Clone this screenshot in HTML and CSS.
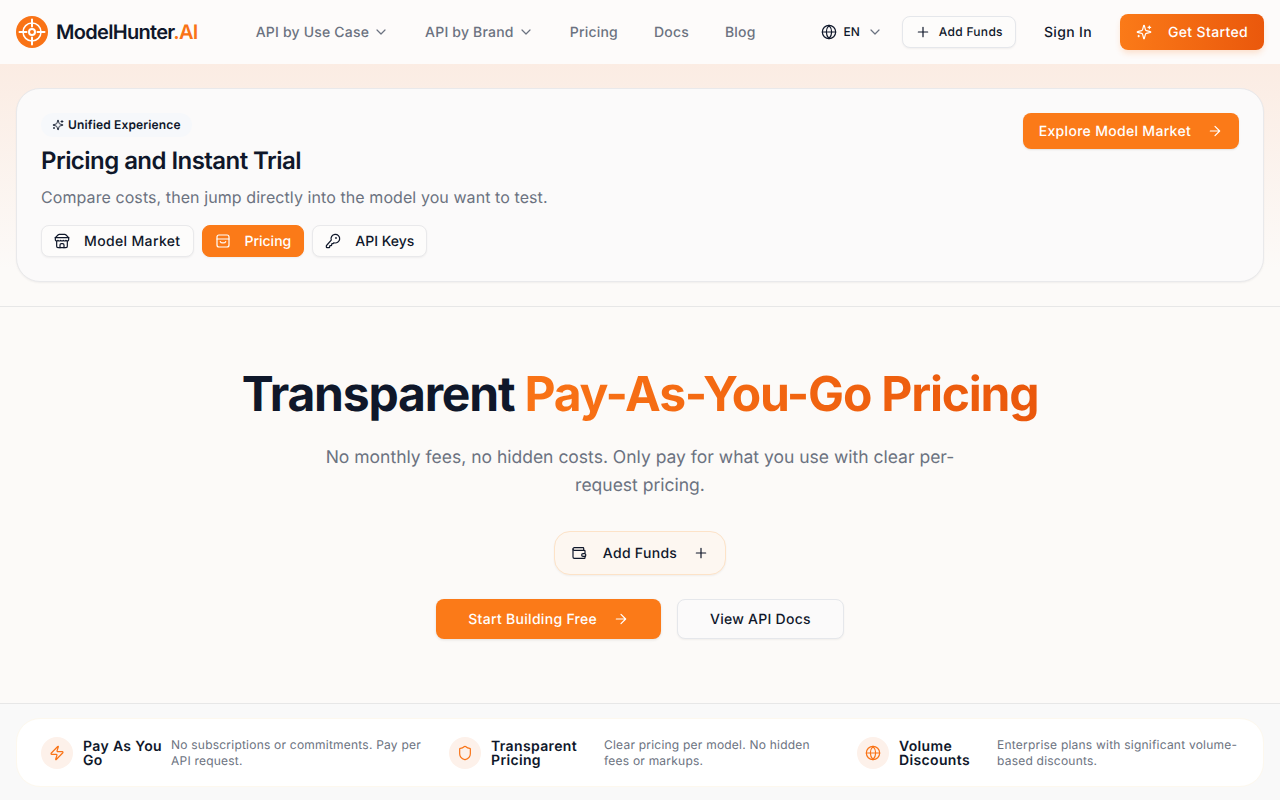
FILE: index.html
```html
<!DOCTYPE html>
<html lang="en">
<head>
  <meta charset="UTF-8">
  <meta name="viewport" content="width=device-width, initial-scale=1.0">
  <title>ModelHunter.AI Pricing</title>
  <link rel="stylesheet" href="styles.css">
</head>
<body>

<!-- Header -->
<header class="site-header">
  <a class="logo">
    <svg class="logo-mark" viewBox="0 0 32 32" fill="none">
      <circle cx="16" cy="16" r="16" fill="#f97316"/>
      <circle cx="16" cy="16" r="9" stroke="#fff" stroke-width="1.500"/>
      <circle cx="16" cy="16" r="3" stroke="#fff" stroke-width="2"/>
      <path d="M16 3.500v7M16 21.500v7M3.500 16h7M21.500 16h7" stroke="#fff" stroke-width="2" stroke-linecap="round"/>
    </svg>
    <span class="logo-text">ModelHunter<span class="logo-accent">.AI</span></span>
  </a>

  <nav class="main-nav">
    <a class="nav-link">API by Use Case
      <svg class="icon-16" viewBox="0 0 24 24"><path d="m6 9 6 6 6-6"/></svg>
    </a>
    <a class="nav-link">API by Brand
      <svg class="icon-16" viewBox="0 0 24 24"><path d="m6 9 6 6 6-6"/></svg>
    </a>
    <a class="nav-link">Pricing</a>
    <a class="nav-link">Docs</a>
    <a class="nav-link">Blog</a>
  </nav>

  <div class="header-actions">
    <div class="lang">
      <svg class="icon-16" viewBox="0 0 24 24"><circle cx="12" cy="12" r="10"/><path d="M2 12h20M12 2a14.500 14.500 0 0 0 0 20 14.500 14.500 0 0 0 0-20"/></svg>
      <span>EN</span>
      <svg class="icon-16 lang-caret" viewBox="0 0 24 24"><path d="m6 9 6 6 6-6"/></svg>
    </div>
    <a class="add-funds-small">
      <svg class="icon-16" viewBox="0 0 24 24"><path d="M5 12h14M12 5v14"/></svg>
      Add Funds
    </a>
    <a class="sign-in">Sign In</a>
    <a class="get-started">
      <svg class="icon-16" viewBox="0 0 24 24"><path d="M9.900 15.500a2 2 0 0 0-1.400-1.400l-6.100-1.600a.5.5 0 0 1 0-1l6.100-1.600a2 2 0 0 0 1.400-1.400l1.600-6.100a.5.5 0 0 1 1 0l1.600 6.100a2 2 0 0 0 1.400 1.400l6.100 1.600a.5.5 0 0 1 0 1l-6.100 1.600a2 2 0 0 0-1.400 1.400l-1.600 6.100a.5.5 0 0 1-1 0z"/><path d="M20 3v4M22 5h-4M4 17v2M5 18H3"/></svg>
      Get Started
    </a>
  </div>
</header>

<!-- Trial Strip -->
<section class="trial-strip">
  <div class="trial-card">
    <div class="trial-info">
      <div class="pill">
        <svg class="icon-12" viewBox="0 0 24 24"><path d="M9.900 15.500a2 2 0 0 0-1.400-1.400l-6.100-1.600a.5.5 0 0 1 0-1l6.100-1.600a2 2 0 0 0 1.400-1.400l1.600-6.100a.5.5 0 0 1 1 0l1.600 6.100a2 2 0 0 0 1.400 1.400l6.100 1.600a.5.5 0 0 1 0 1l-6.100 1.600a2 2 0 0 0-1.400 1.400l-1.600 6.100a.5.5 0 0 1-1 0z"/><path d="M20 3v4M22 5h-4M4 17v2M5 18H3"/></svg>
        Unified Experience
      </div>
      <h2 class="trial-title">Pricing and Instant Trial</h2>
      <p class="trial-text">Compare costs, then jump directly into the model you want to test.</p>
      <div class="tabs">
        <a class="tab">
          <svg class="icon-16" viewBox="0 0 24 24"><path d="m2 7 4.400-4.400A2 2 0 0 1 7.800 2h8.400a2 2 0 0 1 1.400.6L22 7"/><path d="M4 12v8a2 2 0 0 0 2 2h12a2 2 0 0 0 2-2v-8"/><path d="M15 22v-4a2 2 0 0 0-2-2h-2a2 2 0 0 0-2 2v4"/><path d="M2 7h20"/><path d="M22 7v3a2 2 0 0 1-2 2 2.700 2.700 0 0 1-2-1 2.700 2.700 0 0 1-2 1 2.700 2.700 0 0 1-2-1 2.700 2.700 0 0 1-2 1 2.700 2.700 0 0 1-2-1 2.700 2.700 0 0 1-2 1 2.700 2.700 0 0 1-2-1 2.700 2.700 0 0 1-2 1 2 2 0 0 1-2-2V7"/></svg>
          Model Market
        </a>
        <a class="tab tab-active">
          <svg class="icon-16" viewBox="0 0 24 24"><rect x="3" y="3" width="18" height="18" rx="3"/><path d="M3 9h18M8 13c1 2.500 7 2.500 8 0"/></svg>
          Pricing
        </a>
        <a class="tab tab-short">
          <svg class="icon-16" viewBox="0 0 24 24"><path d="M2.600 18.400A2 2 0 0 0 2 19.800V21a1 1 0 0 0 1 1h3a1 1 0 0 0 1-1v-1a1 1 0 0 1 1-1h1a1 1 0 0 0 1-1v-1a1 1 0 0 1 1-1h.2a2 2 0 0 0 1.400-.6l.8-.8a6.500 6.500 0 1 0-4-4z"/><circle cx="16.500" cy="7.500" r=".5"/></svg>
          API Keys
        </a>
      </div>
    </div>
    <a class="explore-btn">Explore Model Market
      <svg class="icon-16" viewBox="0 0 24 24"><path d="M5 12h14M12 5l7 7-7 7"/></svg>
    </a>
  </div>
</section>

<!-- Hero -->
<section class="hero">
  <h1 class="hero-title">Transparent <span class="hero-accent">Pay-As-You-Go Pricing</span></h1>
  <p class="hero-text">No monthly fees, no hidden costs. Only pay for what you use with clear per-request pricing.</p>
  <a class="add-funds-big">
    <svg class="icon-16" viewBox="0 0 24 24"><path d="M19 7V5a1 1 0 0 0-1-1H5a2 2 0 0 0 0 4h15a1 1 0 0 1 1 1v4h-3a2 2 0 0 0 0 4h3a1 1 0 0 0 1-1v-2"/><path d="M3 6v12a2 2 0 0 0 2 2h15a1 1 0 0 0 1-1v-2"/></svg>
    Add Funds
    <svg class="icon-16" viewBox="0 0 24 24"><path d="M5 12h14M12 5v14"/></svg>
  </a>
  <div class="hero-buttons">
    <a class="btn-primary">Start Building Free
      <svg class="icon-16" viewBox="0 0 24 24"><path d="M5 12h14M12 5l7 7-7 7"/></svg>
    </a>
    <a class="btn-secondary">View API Docs</a>
  </div>
</section>

<!-- Features -->
<section class="features">
  <div class="features-card">
    <div class="feature feature-one">
      <span class="feature-icon">
        <svg class="icon-16" viewBox="0 0 24 24"><path d="M4 14a1 1 0 0 1-.8-1.600l9.900-10.200a.5.5 0 0 1 .9.500l-1.900 6A1 1 0 0 0 13 10h7a1 1 0 0 1 .8 1.600l-9.900 10.200a.5.5 0 0 1-.9-.5l1.900-6A1 1 0 0 0 11 14z"/></svg>
      </span>
      <h3 class="feature-title">Pay As You Go</h3>
      <p class="feature-text">No subscriptions or commitments. Pay per API request.</p>
    </div>
    <div class="feature feature-two">
      <span class="feature-icon">
        <svg class="icon-16" viewBox="0 0 24 24"><path d="M20 13c0 5-3.500 7.500-7.700 8.900a1 1 0 0 1-.6 0C7.500 20.500 4 18 4 13V6a1 1 0 0 1 1-1c2 0 4.500-1.200 6.200-2.700a1.200 1.200 0 0 1 1.600 0C14.500 3.800 17 5 19 5a1 1 0 0 1 1 1z"/></svg>
      </span>
      <h3 class="feature-title">Transparent Pricing</h3>
      <p class="feature-text">Clear pricing per model. No hidden fees or markups.</p>
    </div>
    <div class="feature feature-three">
      <span class="feature-icon">
        <svg class="icon-16" viewBox="0 0 24 24"><circle cx="12" cy="12" r="10"/><path d="M2 12h20M12 2a14.500 14.500 0 0 0 0 20 14.500 14.500 0 0 0 0-20"/></svg>
      </span>
      <h3 class="feature-title">Volume Discounts</h3>
      <p class="feature-text">Enterprise plans with significant volume-based discounts.</p>
    </div>
  </div>
</section>

</body>
</html>
```

FILE: styles.css
```css
* {
  box-sizing: border-box;
}

html,
body {
  height: 800px;
  overflow: hidden;
}

body {
  font-family: Inter, "Liberation Sans", sans-serif;
  text-rendering: geometricPrecision;
  margin: 0;
  padding: 0;
  background-color: #fcfaf8;
  color: #0f172a;
  display: flex;
  flex-direction: column;
}

svg {
  flex-shrink: 0;
}

.icon-16,
.icon-12 {
  fill: none;
  stroke: currentColor;
  stroke-width: 1.8;
  stroke-linecap: round;
  stroke-linejoin: round;
}

.icon-16 {
  width: 16px;
  height: 16px;
}

.icon-12 {
  width: 12px;
  height: 12px;
}

/* Header */
.site-header {
  height: 64px;
  flex-shrink: 0;
  padding: 0 16px;
  display: flex;
  align-items: center;
  background-color: #fdfbfa;
}

.logo {
  display: flex;
  align-items: center;
  gap: 8px;
}

.logo-mark {
  width: 32px;
  height: 32px;
}

.logo-text {
  font-size: 20px;
  line-height: 28px;
  font-weight: 600;
  letter-spacing: -0.7px;
}

.logo-accent {
  color: #f97316;
}

.main-nav {
  display: flex;
  align-items: center;
  gap: 36px;
  margin-left: 58px;
}

.nav-link {
  display: flex;
  align-items: center;
  gap: 4px;
  font-size: 14px;
  line-height: 21px;
  font-weight: 500;
  letter-spacing: 0.2px;
  color: #6b7280;
}

.header-actions {
  display: flex;
  align-items: center;
  margin-left: auto;
}

.lang {
  display: flex;
  align-items: center;
  gap: 6px;
  font-size: 12px;
  line-height: 16px;
  font-weight: 500;
}

.lang-caret {
  color: #6b7280;
  margin-left: 1px;
}

.add-funds-small {
  display: flex;
  align-items: center;
  gap: 8px;
  height: 32px;
  padding: 0 12px;
  margin-left: 19px;
  font-size: 12px;
  line-height: 16px;
  font-weight: 500;
  letter-spacing: 0.3px;
  background-color: #fdfcfb;
  border: 1px solid #e5e7eb;
  border-radius: 8px;
  box-shadow: 0 1px 2px rgba(0, 0, 0, 0.05);
}

.sign-in {
  margin-left: 28px;
  font-size: 14px;
  line-height: 21px;
  font-weight: 500;
  letter-spacing: 0.35px;
}

.get-started {
  display: flex;
  align-items: center;
  gap: 16px;
  height: 36px;
  padding: 0 16px;
  margin-left: 28px;
  font-size: 14px;
  line-height: 21px;
  font-weight: 500;
  letter-spacing: 0.35px;
  color: #fff;
  background: linear-gradient(to right, #fb7a18, #ea580c);
  border-radius: 8px;
  box-shadow: 0 4px 6px -1px rgba(249, 115, 22, 0.2);
}

/* Trial Strip */
.trial-strip {
  height: 243px;
  flex-shrink: 0;
  padding: 24px 16px;
  background: linear-gradient(to bottom, #fbece3, #fcfaf8 85%);
  border-bottom: 1px solid #e7e7e7;
}

.trial-card {
  height: 194px;
  padding: 24px;
  display: flex;
  justify-content: space-between;
  align-items: flex-start;
  background-color: #fbfafa;
  border: 1px solid #e9e9eb;
  border-radius: 24px;
  box-shadow: 0 1px 2px rgba(0, 0, 0, 0.05);
}

.pill {
  display: flex;
  width: fit-content;
  align-items: center;
  gap: 4px;
  height: 24px;
  padding: 0 11px;
  font-size: 12px;
  line-height: 16px;
  font-weight: 600;
  letter-spacing: 0.15px;
  background-color: #f6f8fb;
  border-radius: 999px;
}

.trial-title {
  margin: 8px 0 0;
  font-size: 24px;
  line-height: 32px;
  font-weight: 600;
  letter-spacing: -0.55px;
}

.trial-text {
  margin: 8px 0 0;
  font-size: 16px;
  line-height: 24px;
  letter-spacing: 0.08px;
  color: #6b7280;
}

.tabs {
  display: flex;
  gap: 8px;
  margin-top: 16px;
}

.tab {
  display: flex;
  align-items: center;
  gap: 14px;
  height: 32px;
  padding: 0 13px 0 12px;
  font-size: 14px;
  line-height: 21px;
  font-weight: 500;
  letter-spacing: 0.35px;
  background-color: #fdfcfb;
  border: 1px solid #e9e9eb;
  border-radius: 8px;
  box-shadow: 0 1px 2px rgba(0, 0, 0, 0.05);
}

.tab-active {
  gap: 13px;
  padding: 0 12px;
  letter-spacing: 0;
  color: #fff;
  background-color: #fb7a18;
  border-color: #fb7a18;
}

.tab-short {
  padding: 0 12px;
  letter-spacing: 0;
}

.explore-btn {
  display: flex;
  align-items: center;
  gap: 16px;
  height: 36px;
  padding: 0 16px;
  font-size: 14px;
  line-height: 21px;
  font-weight: 500;
  letter-spacing: 0.3px;
  color: #fff;
  background-color: #fb7a18;
  border-radius: 8px;
  box-shadow: 0 1px 2px rgba(0, 0, 0, 0.1);
}

/* Hero */
.hero {
  height: 397px;
  flex-shrink: 0;
  padding-top: 57px;
  display: flex;
  flex-direction: column;
  align-items: center;
  text-align: center;
  background-color: #fcfaf8;
  border-bottom: 1px solid #e7e7e7;
}

.hero-title {
  margin: 0;
  font-size: 48px;
  line-height: 60px;
  font-weight: 700;
  letter-spacing: -1.2px;
}

.hero-accent {
  background: linear-gradient(to right, #f97316, #ea580c);
  -webkit-background-clip: text;
  background-clip: text;
  color: transparent;
}

.hero-text {
  width: 672px;
  margin: 20px 0 0;
  padding: 0 16px;
  font-size: 17.5px;
  line-height: 28px;
  color: #6b7280;
}

.add-funds-big {
  display: flex;
  align-items: center;
  gap: 16px;
  height: 44px;
  padding: 0 16px;
  margin-top: 31px;
  font-size: 14px;
  line-height: 21px;
  font-weight: 500;
  letter-spacing: 0.3px;
  background-color: #fdf7f1;
  border: 1px solid #fde3c8;
  border-radius: 16px;
  box-shadow: 0 1px 2px rgba(0, 0, 0, 0.05);
}

.hero-buttons {
  display: flex;
  gap: 16px;
  margin-top: 24px;
}

.btn-primary,
.btn-secondary {
  display: flex;
  align-items: center;
  height: 40px;
  font-size: 14px;
  line-height: 21px;
  font-weight: 500;
  letter-spacing: 0.3px;
  border-radius: 8px;
}

.btn-primary {
  gap: 16px;
  padding: 0 32px;
  color: #fff;
  background-color: #fb7a18;
  box-shadow: 0 1px 3px rgba(0, 0, 0, 0.1);
}

.btn-secondary {
  padding: 0 32px;
  letter-spacing: 0.25px;
  background-color: #fbfafa;
  border: 1px solid #e5e7eb;
  box-shadow: 0 1px 2px rgba(0, 0, 0, 0.05);
}

/* Features */
.features {
  flex-grow: 1;
  padding: 14px 16px 0;
  background-color: #f9f9f9;
}

.features-card {
  height: 69px;
  padding: 0 24px;
  display: flex;
  align-items: center;
  background-color: #fff;
  border: 1px solid #fdf8ee;
  border-radius: 24px;
}

.feature {
  display: flex;
  align-items: center;
  gap: 10px;
}

.feature-one,
.feature-two {
  width: 408px;
  flex-shrink: 0;
}

.feature-three {
  flex: 1;
}

.feature-icon {
  width: 32px;
  height: 32px;
  flex-shrink: 0;
  display: flex;
  align-items: center;
  justify-content: center;
  color: #f97316;
  background-color: #fdf1ea;
  border-radius: 50%;
}

.feature-title {
  margin: 2px -2px 0 0;
  width: 80px;
  flex-shrink: 0;
  font-size: 14px;
  line-height: 14px;
  font-weight: 600;
  letter-spacing: 0.35px;
}

.feature-two .feature-title {
  width: 105px;
}

.feature-three .feature-title {
  width: 90px;
}

.feature-text {
  margin: 0;
  width: 258px;
  flex-shrink: 0;
  font-size: 12px;
  line-height: 16px;
  letter-spacing: 0.22px;
  color: #6b7280;
}

.feature-two .feature-text {
  width: 230px;
}

.feature-three .feature-text {
  width: 246px;
}
```
